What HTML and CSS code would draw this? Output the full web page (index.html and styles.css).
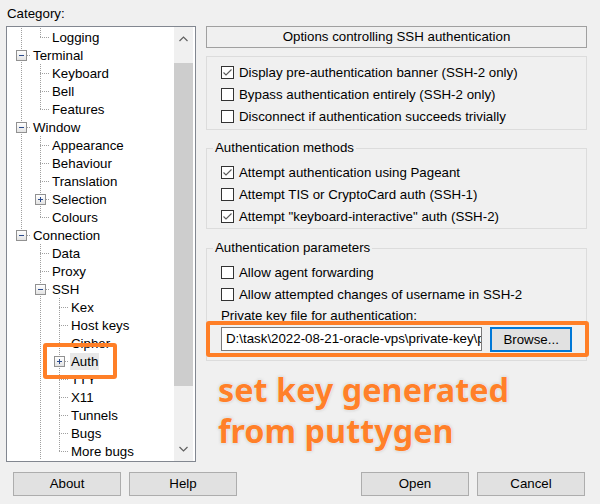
FILE: index.html
```html
<!DOCTYPE html>
<html>
<head>
<meta charset="utf-8">
<title>PuTTY Configuration - Auth</title>
<link rel="stylesheet" href="styles.css">
</head>
<body>
<div class="dialog">
  <div class="left">
    <div class="cat">Category:</div>
    <div class="tree">
      <ul class="rows">
        <li class="row"><span class="g v"></span><span class="c end"></span><span class="t">Logging</span></li>
        <li class="row"><span class="c mid"><span class="box minus"></span></span><span class="t">Terminal</span></li>
        <li class="row"><span class="g v"></span><span class="c mid"></span><span class="t">Keyboard</span></li>
        <li class="row"><span class="g v"></span><span class="c mid"></span><span class="t">Bell</span></li>
        <li class="row"><span class="g v"></span><span class="c end"></span><span class="t">Features</span></li>
        <li class="row"><span class="c mid"><span class="box minus"></span></span><span class="t">Window</span></li>
        <li class="row"><span class="g v"></span><span class="c mid"></span><span class="t">Appearance</span></li>
        <li class="row"><span class="g v"></span><span class="c mid"></span><span class="t">Behaviour</span></li>
        <li class="row"><span class="g v"></span><span class="c mid"></span><span class="t">Translation</span></li>
        <li class="row"><span class="g v"></span><span class="c mid"><span class="box plus"></span></span><span class="t">Selection</span></li>
        <li class="row"><span class="g v"></span><span class="c end"></span><span class="t">Colours</span></li>
        <li class="row"><span class="c end"><span class="box minus"></span></span><span class="t">Connection</span></li>
        <li class="row"><span class="g"></span><span class="c mid"></span><span class="t">Data</span></li>
        <li class="row"><span class="g"></span><span class="c mid"></span><span class="t">Proxy</span></li>
        <li class="row"><span class="g"></span><span class="c mid"><span class="box minus"></span></span><span class="t">SSH</span></li>
        <li class="row"><span class="g"></span><span class="g v"></span><span class="c mid"></span><span class="t">Kex</span></li>
        <li class="row"><span class="g"></span><span class="g v"></span><span class="c mid"></span><span class="t">Host keys</span></li>
        <li class="row"><span class="g"></span><span class="g v"></span><span class="c mid"></span><span class="t">Cipher</span></li>
        <li class="row"><span class="g"></span><span class="g v"></span><span class="c mid"><span class="box plus"></span></span><span class="t sel">Auth</span></li>
        <li class="row"><span class="g"></span><span class="g v"></span><span class="c mid"></span><span class="t">TTY</span></li>
        <li class="row"><span class="g"></span><span class="g v"></span><span class="c mid"></span><span class="t">X11</span></li>
        <li class="row"><span class="g"></span><span class="g v"></span><span class="c mid"></span><span class="t">Tunnels</span></li>
        <li class="row"><span class="g"></span><span class="g v"></span><span class="c mid"></span><span class="t">Bugs</span></li>
        <li class="row"><span class="g"></span><span class="g v"></span><span class="c end"></span><span class="t">More bugs</span></li>
      </ul>
      <div class="sbar">
        <div class="sbtn"><svg width="9" height="6" viewBox="0 0 9 6"><polyline points="0.5,5 4.5,1 8.5,5" fill="none" stroke="#606060" stroke-width="1.2"/></svg></div>
        <div class="track"><div class="thumb"></div></div>
        <div class="sbtn"><svg width="9" height="6" viewBox="0 0 9 6"><polyline points="0.5,1 4.5,5 8.5,1" fill="none" stroke="#606060" stroke-width="1.2"/></svg></div>
      </div>
    </div>
  </div>

  <div class="right">
    <div class="title">Options controlling SSH authentication</div>

    <fieldset class="grp first">
      <div class="chk"><svg class="cb" width="13" height="13" viewBox="0 0 13 13"><rect x="0.5" y="0.5" width="12" height="12" fill="#fff" stroke="#333"/><polyline points="2.5,6.5 5,9 10.5,3.5" fill="none" stroke="#5a5a5a" stroke-width="1.1"/></svg><span>Display pre-authentication banner (SSH-2 only)</span></div>
      <div class="chk"><svg class="cb" width="13" height="13" viewBox="0 0 13 13"><rect x="0.5" y="0.5" width="12" height="12" fill="#fff" stroke="#333"/></svg><span>Bypass authentication entirely (SSH-2 only)</span></div>
      <div class="chk"><svg class="cb" width="13" height="13" viewBox="0 0 13 13"><rect x="0.5" y="0.5" width="12" height="12" fill="#fff" stroke="#333"/></svg><span>Disconnect if authentication succeeds trivially</span></div>
    </fieldset>

    <fieldset class="grp second">
      <legend>Authentication methods</legend>
      <div class="chk"><svg class="cb" width="13" height="13" viewBox="0 0 13 13"><rect x="0.5" y="0.5" width="12" height="12" fill="#fff" stroke="#333"/><polyline points="2.5,6.5 5,9 10.5,3.5" fill="none" stroke="#5a5a5a" stroke-width="1.1"/></svg><span>Attempt authentication using Pageant</span></div>
      <div class="chk"><svg class="cb" width="13" height="13" viewBox="0 0 13 13"><rect x="0.5" y="0.5" width="12" height="12" fill="#fff" stroke="#333"/></svg><span>Attempt TIS or CryptoCard auth (SSH-1)</span></div>
      <div class="chk"><svg class="cb" width="13" height="13" viewBox="0 0 13 13"><rect x="0.5" y="0.5" width="12" height="12" fill="#fff" stroke="#333"/><polyline points="2.5,6.5 5,9 10.5,3.5" fill="none" stroke="#5a5a5a" stroke-width="1.1"/></svg><span>Attempt "keyboard-interactive" auth (SSH-2)</span></div>
    </fieldset>

    <fieldset class="grp third">
      <legend>Authentication parameters</legend>
      <div class="chk"><svg class="cb" width="13" height="13" viewBox="0 0 13 13"><rect x="0.5" y="0.5" width="12" height="12" fill="#fff" stroke="#333"/></svg><span>Allow agent forwarding</span></div>
      <div class="chk"><svg class="cb" width="13" height="13" viewBox="0 0 13 13"><rect x="0.5" y="0.5" width="12" height="12" fill="#fff" stroke="#333"/></svg><span>Allow attempted changes of username in SSH-2</span></div>
      <div class="lbl">Private key file for authentication:</div>
      <div class="keyrow">
        <div class="key">D:\task\2022-08-21-oracle-vps\private-key\private-key.ppk</div>
        <div class="browse">Browse...</div>
      </div>
    </fieldset>

    <div class="note">set key generated<br>from puttygen</div>
  </div>

  <div class="buttons">
    <div class="btn">About</div>
    <div class="btn">Help</div>
    <div class="spacer"></div>
    <div class="btn">Open</div>
    <div class="btn">Cancel</div>
  </div>

  <div class="mark mark-auth"></div>
  <div class="mark mark-key"></div>
</div>
</body>
</html>
```

FILE: styles.css
```css
html, body {
  margin: 0;
  padding: 0;
  background: #f0f0f0;
}
body {
  font-family: "Liberation Sans", Arial, sans-serif;
  font-size: 13.3px;
  color: #000;
}
.dialog {
  position: relative;
  width: 600px;
  height: 504px;
  box-sizing: border-box;
  padding-left: 6px;
  display: grid;
  grid-template-columns: 190px 381px;
  grid-template-rows: 462px 42px;
  column-gap: 10px;
}

/* ---------- left: category tree ---------- */
.left {
  display: flex;
  flex-direction: column;
}
.cat {
  height: 26px;
  box-sizing: border-box;
  padding: 6px 0 0 1px;
  line-height: 16px;
}
.tree {
  height: 436px;
  box-sizing: border-box;
  border: 1px solid #828790;
  background: #fff;
  display: flex;
}
.rows {
  flex: 1;
  list-style: none;
  margin: 0;
  padding: 1px 0 0 5px;
  overflow: hidden;
}
.row {
  display: flex;
  height: 18px;
  align-items: center;
  white-space: nowrap;
}
.g, .c {
  flex: none;
  width: 19px;
  height: 18px;
  background-repeat: no-repeat;
}
.g.v {
  background-image: repeating-linear-gradient(to bottom, #a0a0a0 0 1px, transparent 1px 2px);
  background-size: 1px 18px;
  background-position: 9px 0;
}
.c {
  display: flex;
  align-items: center;
  padding-left: 4px;
  box-sizing: border-box;
  background-image:
    repeating-linear-gradient(to bottom, #a0a0a0 0 1px, transparent 1px 2px),
    repeating-linear-gradient(to right, #a0a0a0 0 1px, transparent 1px 2px);
  background-position: 9px 0, 9px 9px;
}
.c.mid { background-size: 1px 18px, 10px 1px; }
.c.end { background-size: 1px 10px, 10px 1px; }
.box {
  position: relative;
  width: 11px;
  height: 11px;
  box-sizing: border-box;
  border: 1px solid #919191;
  background: linear-gradient(#ffffff, #e3e3e3);
}
.box::before {
  content: "";
  position: absolute;
  left: 2px;
  top: 4px;
  width: 5px;
  height: 1px;
  background: #2c4b8c;
}
.box.plus::after {
  content: "";
  position: absolute;
  left: 4px;
  top: 2px;
  width: 1px;
  height: 5px;
  background: #2c4b8c;
}
.t {
  margin-left: 1px;
  padding: 0 1px;
  line-height: 17px;
}
.t.sel {
  background: #e8e8e8;
}

.sbar {
  width: 19px;
  margin-right: 2px;
  background: #f0f0f0;
  display: flex;
  flex-direction: column;
}
.sbtn {
  height: 24px;
  display: flex;
  align-items: center;
  justify-content: center;
}
.track {
  flex: 1;
  padding-top: 12px;
}
.thumb {
  height: 323px;
  background: #cdcdcd;
}

/* ---------- right: options ---------- */
.right {
  padding-top: 26px;
  display: flex;
  flex-direction: column;
}
.title {
  height: 22px;
  box-sizing: border-box;
  border: 1px solid #a0a0a0;
  text-align: center;
  line-height: 20px;
}
.grp {
  margin: 0;
  min-width: 0;
  border: 1px solid #dcdcdc;
  padding: 5px 14px 1px 14px;
}
.grp legend {
  padding: 0 2px;
  margin-left: -8px;
  line-height: 16px;
}
.grp.first {
  margin-top: 8px;
  padding-top: 4px;
  padding-bottom: 2px;
}
.grp.second { margin-top: 10px; }
.grp.third {
  margin-top: 11px;
  padding-bottom: 8px;
}
.chk {
  height: 22px;
  display: flex;
  align-items: center;
  gap: 5px;
  white-space: nowrap;
}
.cb { flex: none; display: block; }
.lbl {
  height: 22px;
  line-height: 22px;
  white-space: nowrap;
}
.keyrow {
  display: flex;
  gap: 8px;
  align-items: flex-start;
}
.key {
  width: 262px;
  height: 24px;
  box-sizing: border-box;
  border: 1px solid #7a7a7a;
  background: #fff;
  padding-left: 4px;
  line-height: 22px;
  white-space: nowrap;
  overflow: hidden;
}
.browse {
  width: 82px;
  height: 25px;
  box-sizing: border-box;
  border: 2px solid #0078d7;
  background: #e1e1e1;
  text-align: center;
  line-height: 21px;
}
.note {
  margin: 8px 0 0 12px;
  font-family: "Noto Sans", "Open Sans", sans-serif;
  font-weight: 700;
  font-size: 32.4px;
  line-height: 41px;
  color: #ff8029;
  text-shadow: 0 0 1px #fff, 0 0 2px #fff, 0 0 3px rgba(100, 100, 100, 0.5);
  white-space: nowrap;
}

/* ---------- bottom buttons ---------- */
.buttons {
  grid-column: 1 / -1;
  display: flex;
  gap: 8px;
  padding: 10px 2px 0 7px;
}
.spacer { flex: 1; }
.btn {
  width: 108px;
  height: 24px;
  box-sizing: border-box;
  border: 1px solid #adadad;
  background: #e1e1e1;
  text-align: center;
  line-height: 22px;
}

/* ---------- orange annotation marks ---------- */
.mark {
  position: absolute;
  box-sizing: border-box;
  border: 4px solid #ff7f27;
  border-radius: 3px;
}
.mark-auth {
  left: 43px;
  top: 343px;
  width: 74px;
  height: 36px;
}
.mark-key {
  left: 206px;
  top: 321px;
  width: 383px;
  height: 36px;
}
```
